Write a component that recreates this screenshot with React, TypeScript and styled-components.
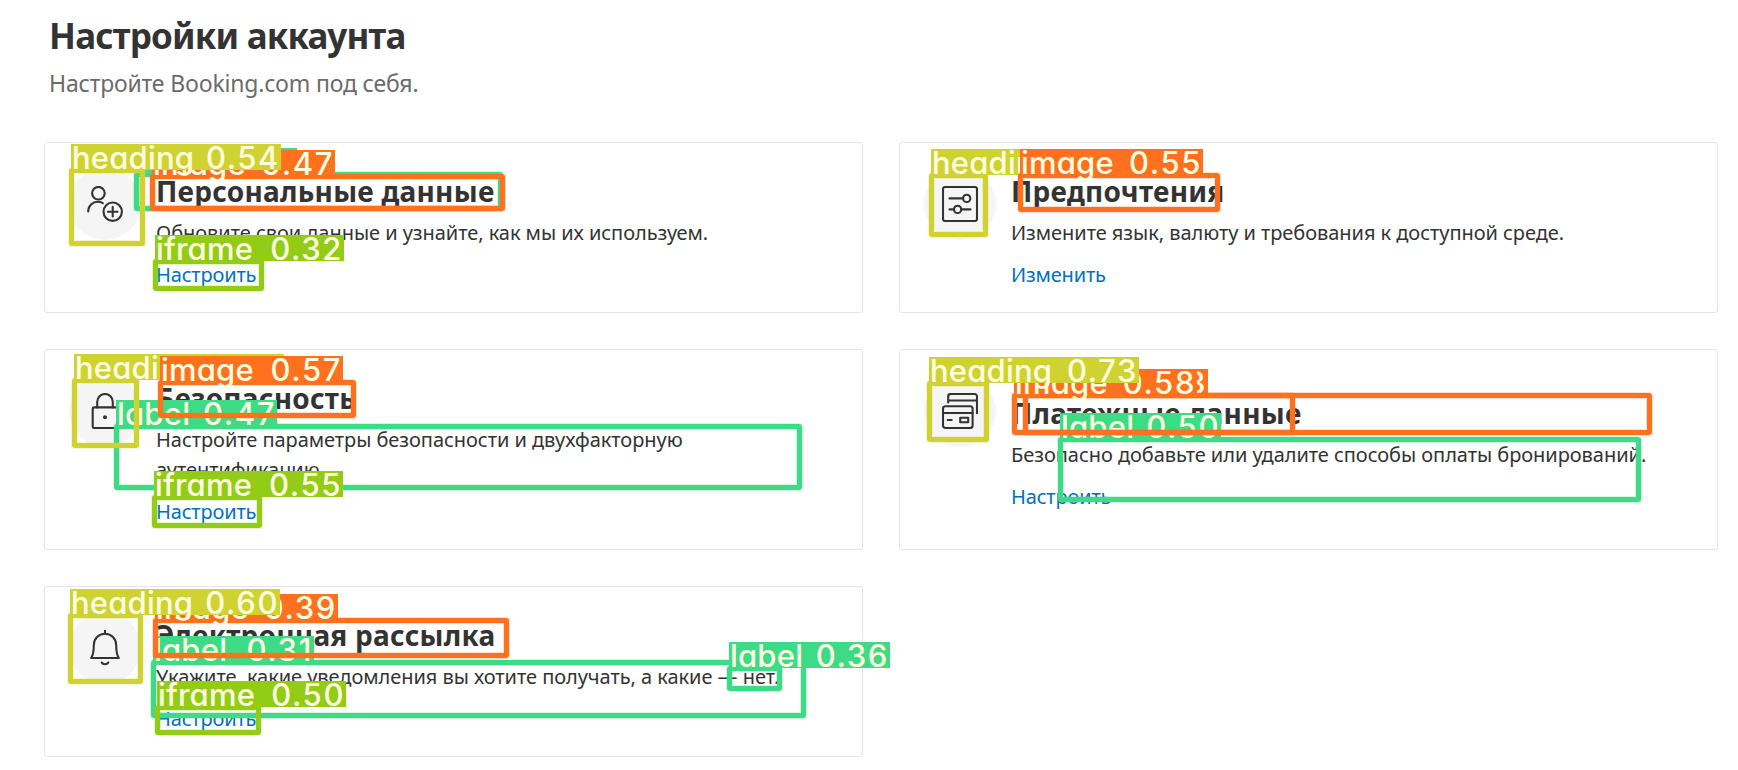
import React from 'react';
import styled, { createGlobalStyle } from 'styled-components';

const GlobalStyle = createGlobalStyle`
  * { box-sizing: border-box; }
  body {
    margin: 0;
    background: #fff;
    color: #333;
    font-family: "Noto Sans", "Open Sans", sans-serif;
  }
`;

const Page = styled.main`
  position: relative;
  width: 1738px;
  height: 770px;
  overflow: hidden;
  padding: 12px 20px 0 44px;
`;

const Header = styled.header`
  padding-left: 5px;
  margin-bottom: 43px;
`;

const PageTitle = styled.h1`
  margin: 0 0 7px;
  font-size: 35px;
  line-height: 48px;
  font-weight: 700;
  letter-spacing: -0.8px;
`;

const Subtitle = styled.p`
  margin: 0;
  color: #6b6b6b;
  font-size: 23px;
  line-height: 32px;
  letter-spacing: -0.18px;
`;

const CardGrid = styled.div`
  display: grid;
  grid-template-columns: 1fr 1fr;
  gap: 36px;
`;

const Card = styled.section`
  display: flex;
  align-items: flex-start;
  padding: 24px 24px 22px;
  border: 1px solid #e6e6e6;
  border-radius: 3px;
`;

const IconCircle = styled.div`
  display: flex;
  align-items: center;
  justify-content: center;
  flex: none;
  width: 72px;
  height: 72px;
  margin: 1px 15px 0 0;
  border-radius: 50%;
  background: #f5f5f5;
`;

const Glyph = styled.svg`
  width: 36px;
  height: 36px;
  fill: none;
  stroke: #333;
  stroke-width: 2.1;
  stroke-linecap: round;
  stroke-linejoin: round;
`;

const CardBody = styled.div`
  align-self: center;
  padding-top: 6px;
  white-space: nowrap;
`;

const CardTitle = styled.h2`
  margin: 0 0 9px;
  font-size: 28px;
  line-height: 36px;
  font-weight: 700;
  letter-spacing: 0.25px;
`;

const CardText = styled.p`
  margin: 0 0 12px;
  font-size: 20px;
  line-height: 30px;
  letter-spacing: -0.05px;
`;

const CardLink = styled.a`
  display: block;
  color: #0071c2;
  font-size: 20px;
  line-height: 30px;
  letter-spacing: -0.17px;
  text-decoration: none;
`;

type Kind = 'heading' | 'image' | 'iframe' | 'label';

const kindColor: Record<Kind, string> = {
  heading: '#cfd231',
  image: '#ff701f',
  iframe: '#92cc17',
  label: '#3ddb86',
};

const tagWidth: Record<Kind, number> = { heading: 210, image: 183, iframe: 189, label: 161 };

const DetectionBox = styled.div<{ $kind: Kind; $x: number; $y: number; $right: number; $bottom: number }>`
  position: absolute;
  left: ${p => p.$x}px;
  top: ${p => p.$y}px;
  width: ${p => p.$right - p.$x}px;
  height: ${p => p.$bottom - p.$y}px;
  border: 5px solid ${p => kindColor[p.$kind]};
  border-radius: 3px;
  box-shadow: 0 0 0 1px ${p => kindColor[p.$kind]}38, inset 0 0 0 1px ${p => kindColor[p.$kind]}38;
`;

const DetectionTag = styled.div<{ $kind: Kind }>`
  position: absolute;
  left: -3px;
  bottom: calc(100% + 3px);
  display: flex;
  justify-content: space-between;
  width: ${p => tagWidth[p.$kind]}px;
  height: 26px;
  padding: 0 1px;
  background: ${p => kindColor[p.$kind]};
  color: #ffffe1;
  font-family: Inter, sans-serif;
  font-size: 31px;
  font-weight: 500;
  line-height: 27px;
  font-feature-settings: "cv11";
  white-space: nowrap;
`;

const TagName = styled.span`
  letter-spacing: 0.2px;
`;

const TagScore = styled.span`
  letter-spacing: 1.6px;
`;

const UserIcon = () => (
  <Glyph viewBox="0 0 36 36">
    <circle cx="11.4" cy="7.2" r="6.3" />
    <path d="M1.2 25.5C1.2 19.6 5.6 15.8 10.8 15.8c1.9 0 3.5.4 5 1.3" />
    <circle cx="25.7" cy="25.7" r="9.2" />
    <path d="M25.7 20.9v9.6M20.9 25.7h9.6" />
  </Glyph>
);

const SlidersIcon = () => (
  <Glyph viewBox="0 0 36 36">
    <rect x="1" y="1" width="34" height="34" rx="2" />
    <path d="M7.5 12.4h13.4M7.5 23.4h4.3M19.4 23.4h9.1" />
    <circle cx="24.7" cy="12.4" r="3.6" />
    <circle cx="15.6" cy="23.4" r="3.6" />
  </Glyph>
);

const LockIcon = () => (
  <Glyph viewBox="0 0 36 36">
    <rect x="5.7" y="14.4" width="24.6" height="20.6" rx="1.5" />
    <path d="M10.2 14.4V9a7.8 8 0 0 1 15.6 0v5.4" />
    <circle cx="18" cy="24.2" r="1" fill="#333" />
  </Glyph>
);

const CardsIcon = () => (
  <Glyph viewBox="0 0 36 36">
    <rect x="1" y="13.3" width="29.6" height="21.7" rx="2.5" />
    <path d="M1 20h29.6M5.700 27h4" />
    <rect x="18.2" y="24.7" width="8" height="4.6" />
    <path d="M6.2 9.5V3.5A2.5 2.5 0 0 1 8.7 1H32.5A2.5 2.5 0 0 1 35 3.5V20.2M6.2 7.5H35" />
  </Glyph>
);

const BellIcon = () => (
  <Glyph viewBox="0 0 36 36">
    <path d="M18 .8v3M4.2 28C6.3 25 6.8 21 6.8 15A11.2 11.2 0 0 1 29.2 15C29.2 21 29.7 25 31.8 28ZM14.7 32.5a3.5 2.6 0 0 0 6.6 0" />
  </Glyph>
);

interface Setting {
  icon: React.ReactNode;
  title: string;
  lines: string[];
  link: string;
}

const settings: Setting[] = [
  { icon: <UserIcon />, title: 'Персональные данные', lines: ['Обновите свои данные и узнайте, как мы их используем.'], link: 'Настроить' },
  { icon: <SlidersIcon />, title: 'Предпочтения', lines: ['Измените язык, валюту и требования к доступной среде.'], link: 'Изменить' },
  { icon: <LockIcon />, title: 'Безопасность', lines: ['Настройте параметры безопасности и двухфакторную', 'аутентификацию.'], link: 'Настроить' },
  { icon: <CardsIcon />, title: 'Платежные данные', lines: ['Безопасно добавьте или удалите способы оплаты бронирований.'], link: 'Настроить' },
  { icon: <BellIcon />, title: 'Электронная рассылка', lines: ['Укажите, какие уведомления вы хотите получать, а какие — нет.'], link: 'Настроить' },
];

interface Detection {
  kind: Kind;
  score?: string;
  /** left, top, right, bottom */
  box: [number, number, number, number];
}

/* Listed from the lowest confidence up, so that surer boxes lie on top. */
const detections: Detection[] = [
  { kind: 'label', box: [134, 172, 503, 211] },
  { kind: 'label', score: '0.31', box: [151, 660, 806, 718] },
  { kind: 'iframe', score: '0.32', box: [153, 259, 264, 291] },
  { kind: 'label', score: '0.36', box: [727, 666, 782, 691] },
  { kind: 'image', score: '0.39', box: [153, 618, 509, 658] },
  { kind: 'image', score: '0.47', box: [150, 174, 505, 211] },
  { kind: 'label', score: '0.47', box: [114, 424, 802, 490] },
  { kind: 'iframe', score: '0.50', box: [155, 705, 261, 735] },
  { kind: 'label', score: '0.50', box: [1058, 437, 1641, 502] },
  { kind: 'image', score: '0.53', box: [1023, 393, 1652, 435] },
  { kind: 'heading', score: '0.54', box: [69, 168, 145, 246] },
  { kind: 'heading', score: '0.54', box: [929, 173, 988, 237] },
  { kind: 'image', score: '0.55', box: [1018, 173, 1220, 212] },
  { kind: 'iframe', score: '0.55', box: [152, 495, 262, 528] },
  { kind: 'heading', score: '0.55', box: [72, 378, 139, 448] },
  { kind: 'image', score: '0.57', box: [158, 380, 356, 418] },
  { kind: 'image', score: '0.58', box: [1012, 393, 1295, 435] },
  { kind: 'heading', score: '0.60', box: [68, 613, 143, 684] },
  { kind: 'heading', score: '0.73', box: [927, 381, 989, 442] },
];

export default function App() {
  return (
    <Page>
      <GlobalStyle />
      <Header>
        <PageTitle>Настройки аккаунта</PageTitle>
        <Subtitle>Настройте Booking.com под себя.</Subtitle>
      </Header>
      <CardGrid>
        {settings.map(s => (
          <Card key={s.title}>
            <IconCircle>{s.icon}</IconCircle>
            <CardBody>
              <CardTitle>{s.title}</CardTitle>
              <CardText>
                {s.lines.map((line, i) => (
                  <React.Fragment key={line}>
                    {i > 0 && <br />}
                    {line}
                  </React.Fragment>
                ))}
              </CardText>
              <CardLink>{s.link}</CardLink>
            </CardBody>
          </Card>
        ))}
      </CardGrid>
      {detections.map(({ kind, score, box: [x, y, right, bottom] }) => (
        <DetectionBox key={`${x}-${y}`} $kind={kind} $x={x} $y={y} $right={right} $bottom={bottom}>
          <DetectionTag $kind={kind}>
            {score && (
              <>
                <TagName>{kind}</TagName>
                <TagScore>{score}</TagScore>
              </>
            )}
          </DetectionTag>
        </DetectionBox>
      ))}
    </Page>
  );
}
